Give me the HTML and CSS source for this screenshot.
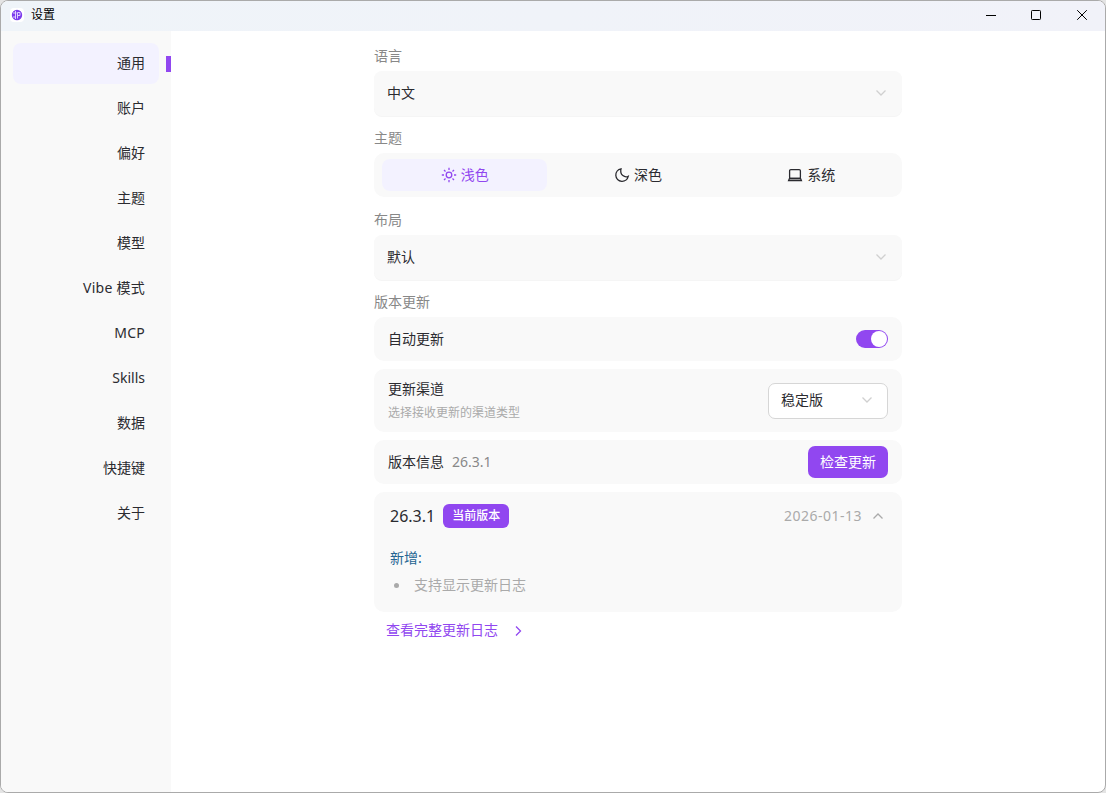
FILE: index.html
```html
<!DOCTYPE html>
<html lang="zh-CN">
<head>
    <meta charset="UTF-8">
    <title>设置</title>
    <link rel="stylesheet" href="styles.css">
</head>
<body>
<div id="window">
    <header class="titlebar">
        <svg class="logo" width="14" height="14" viewBox="0 0 14 14">
            <rect width="14" height="14" rx="4" fill="#fff"/>
            <circle cx="7" cy="7" r="5.2" fill="#7c3aed"/>
            <path d="M3 5h3.500M3 9h2.500M5.500 3v8M7.500 4.500v6M7.500 4.500h2.500v3H7.500" fill="none" stroke="#e6dbff" stroke-width=".9"/>
        </svg>
        <span class="title">设置</span>
        <div class="controls">
            <svg width="12" height="12" viewBox="0 0 12 12"><path d="M1 6.5h10"/></svg>
            <svg width="12" height="12" viewBox="0 0 12 12"><rect x="1.5" y="1.5" width="9" height="9" rx=".8"/></svg>
            <svg class="close" width="12" height="12" viewBox="0 0 12 12"><path d="M1.2 1.2l9.6 9.6M10.8 1.2l-9.6 9.6"/></svg>
        </div>
    </header>
    <div class="body">
        <nav class="sidebar">
            <a class="active">通用</a>
            <a>账户</a>
            <a>偏好</a>
            <a>主题</a>
            <a>模型</a>
            <a class="latin">Vibe 模式</a>
            <a class="latin">MCP</a>
            <a>Skills</a>
            <a>数据</a>
            <a>快捷键</a>
            <a>关于</a>
        </nav>
        <main>
            <section>
                <h2>语言</h2>
                <div class="card select">
                    <span>中文</span>
                    <svg class="arrow" width="12" height="12" viewBox="0 0 12 12"><path d="M1.5 3.500L6 8l4.500-4.500"/></svg>
                </div>
            </section>
            <section>
                <h2>主题</h2>
                <div class="card themes">
                    <div class="theme selected">
                        <svg width="16" height="16" viewBox="0 0 16 16"><circle cx="8" cy="8" r="2.800"/><path d="M8 .8v2.200M8 13v2.200M.8 8H3M13 8h2.200M3 3l1.500 1.500M11.500 11.500L13 13M3 13l1.500-1.500M11.500 4.500L13 3"/></svg>
                        <span>浅色</span>
                    </div>
                    <div class="theme">
                        <svg width="16" height="16" viewBox="0 0 16 16"><path d="M7 1.800A6.300 6.300 0 1 0 14.300 9.200C11 11 5.500 8 7 1.800z"/></svg>
                        <span>深色</span>
                    </div>
                    <div class="theme">
                        <svg width="16" height="16" viewBox="0 0 16 16"><rect x="2.600" y="2.600" width="10.800" height="8.900" rx="1.200"/><path d="M2.500 11.500h11l.9 2.100H1.600z" fill="#bbb"/></svg>
                        <span>系统</span>
                    </div>
                </div>
            </section>
            <section>
                <h2>布局</h2>
                <div class="card select">
                    <span>默认</span>
                    <svg class="arrow" width="12" height="12" viewBox="0 0 12 12"><path d="M1.500 3.500L6 8l4.500-4.500"/></svg>
                </div>
            </section>
            <section class="updates">
                <h2>版本更新</h2>
                <div class="card row">
                    <span>自动更新</span>
                    <div class="switch"></div>
                </div>
                <div class="card row channel">
                    <div>
                        <p>更新渠道</p>
                        <p class="hint">选择接收更新的渠道类型</p>
                    </div>
                    <div class="dropdown">
                        <span>稳定版</span>
                        <svg class="arrow" width="12" height="12" viewBox="0 0 12 12"><path d="M1.500 3.500L6 8l4.500-4.500"/></svg>
                    </div>
                </div>
                <div class="card row">
                    <span>版本信息<span class="version">26.3.1</span></span>
                    <button>检查更新</button>
                </div>
                <div class="card log">
                    <div class="log-head">
                        <span class="log-version">26.3.1</span>
                        <span class="badge">当前版本</span>
                        <span class="date">2026-01-13</span>
                        <svg class="arrow" width="12" height="12" viewBox="0 0 12 12"><path d="M1.500 8.500L6 4l4.500 4.500"/></svg>
                    </div>
                    <h3>新增:</h3>
                    <ul>
                        <li>支持显示更新日志</li>
                    </ul>
                </div>
                <a class="more">
                    <span>查看完整更新日志</span>
                    <svg width="12" height="12" viewBox="0 0 12 12"><path d="M4 2.500L8.500 7 4 11.500"/></svg>
                </a>
            </section>
        </main>
    </div>
</div>
</body>
</html>
```
FILE: styles.css
```css
* {
    box-sizing: border-box;
}

body {
    margin: 0;
    background-color: #e4e4e4;
    font-family: 'Noto Sans', 'Noto Sans CJK SC', sans-serif;
    font-size: 14px;
    line-height: 20px;
    color: #2b2b30;
}

h2, h3, p, ul {
    margin: 0;
    padding: 0;
    font-size: 14px;
    font-weight: normal;
}

svg {
    display: block;
    flex: none;
    fill: none;
    stroke: currentColor;
}

#window {
    display: flex;
    flex-direction: column;
    width: 1106px;
    height: 793px;
    border: 1px solid #aaa;
    border-radius: 8px;
    background-color: #fff;
    overflow: hidden;
}

.titlebar {
    display: flex;
    align-items: center;
    height: 30px;
    padding: 0 17px 2px 9px;
    background: linear-gradient(90deg, #eff4f9, #f1f2f9);
    color: #000;
}

.logo {
    stroke: none;
}

.title {
    margin-left: 7px;
    font-size: 12px;
}

.controls {
    display: flex;
    gap: 33px;
    margin-left: auto;
}

.close {
    margin-left: 1px;
}

.body {
    display: flex;
    flex: 1;
}

.sidebar {
    display: flex;
    flex-direction: column;
    gap: 4px;
    width: 170px;
    padding: 12px 12px 0;
    background-color: #f9f9f9;
}

.sidebar a {
    position: relative;
    height: 41px;
    padding-right: 14px;
    border-radius: 8px;
    line-height: 40px;
    text-align: right;
}

.sidebar .latin {
    letter-spacing: 0.25px;
}

.sidebar .active {
    background-color: #f3f2ff;
}

.sidebar .active::after {
    content: "";
    position: absolute;
    top: 13px;
    right: -12px;
    width: 5px;
    height: 16px;
    background-color: #9147f0;
}

main {
    width: 528px;
    margin: 14px 0 0 203px;
}

section {
    height: 82px;
}

h2 {
    margin-bottom: 4px;
    line-height: 22px;
    color: #888;
}

.card {
    border-radius: 10px;
    background-color: #f9f9f9;
}

.select {
    display: flex;
    align-items: center;
    justify-content: space-between;
    height: 45px;
    padding: 0 15px 1px 13px;
    border-radius: 8px;
    box-shadow: 0 1px 0 #f5f5f5;
}

.arrow {
    color: #d0d0d0;
    stroke-width: 1.3;
}

.themes {
    display: flex;
    gap: 8px;
    height: 44px;
    padding: 6px 8px;
}

.theme {
    display: flex;
    flex: 1;
    align-items: center;
    justify-content: center;
    gap: 4px;
    border-radius: 8px;
}

.theme svg {
    stroke-width: 1.3;
}

.selected {
    background-color: #f3f2ff;
    color: #9147f0;
}

.updates {
    height: auto;
}

.updates .card {
    margin-bottom: 8px;
}

.row {
    display: flex;
    align-items: center;
    justify-content: space-between;
    height: 44px;
    padding: 0 14px;
}

.switch {
    width: 32px;
    height: 18px;
    padding: 1px;
    border-radius: 9px;
    background-color: #9147f0;
}

.switch::after {
    content: "";
    display: block;
    width: 16px;
    height: 16px;
    margin-left: auto;
    border-radius: 50%;
    background-color: #fff;
}

.channel {
    height: 63px;
}

.hint {
    margin-top: 4px;
    font-size: 12px;
    color: #aaa;
}

.dropdown {
    display: flex;
    align-items: center;
    justify-content: space-between;
    width: 120px;
    height: 36px;
    padding: 0 14px 2px 12px;
    border: 1px solid #d6d6d6;
    border-radius: 7px;
    background-color: #fff;
}

.version {
    margin-left: 8px;
    color: #888;
}

button {
    width: 80px;
    height: 32px;
    padding: 0;
    border: none;
    border-radius: 7px;
    background-color: #9147f0;
    font: inherit;
    color: #fff;
}

.log {
    height: 120px;
    padding: 12px 18px 0 16px;
}

.log-head {
    display: flex;
    align-items: center;
    height: 24px;
    margin-bottom: 20px;
}

.log-version {
    font-size: 16px;
}

.badge {
    height: 24px;
    margin-left: 8px;
    padding: 0 9px;
    border-radius: 6px;
    background-color: #9147f0;
    font-size: 12px;
    font-weight: 500;
    line-height: 24px;
    color: #fff;
}

.date {
    margin: 0 10px 0 auto;
    letter-spacing: 0.5px;
    color: #aaa;
}

.log .arrow {
    color: #aaa;
}

h3 {
    color: #256592;
}

ul {
    margin-top: 7px;
    list-style: none;
}

li {
    display: flex;
    align-items: center;
    color: #aaa;
}

li::before {
    content: "";
    width: 5px;
    height: 5px;
    margin: 0 15px 0 4px;
    border-radius: 50%;
    background-color: #aaa;
}

.more {
    display: flex;
    align-items: center;
    gap: 14px;
    padding-left: 12px;
    color: #9147f0;
}

.more svg {
    stroke-width: 1.3;
}
```
